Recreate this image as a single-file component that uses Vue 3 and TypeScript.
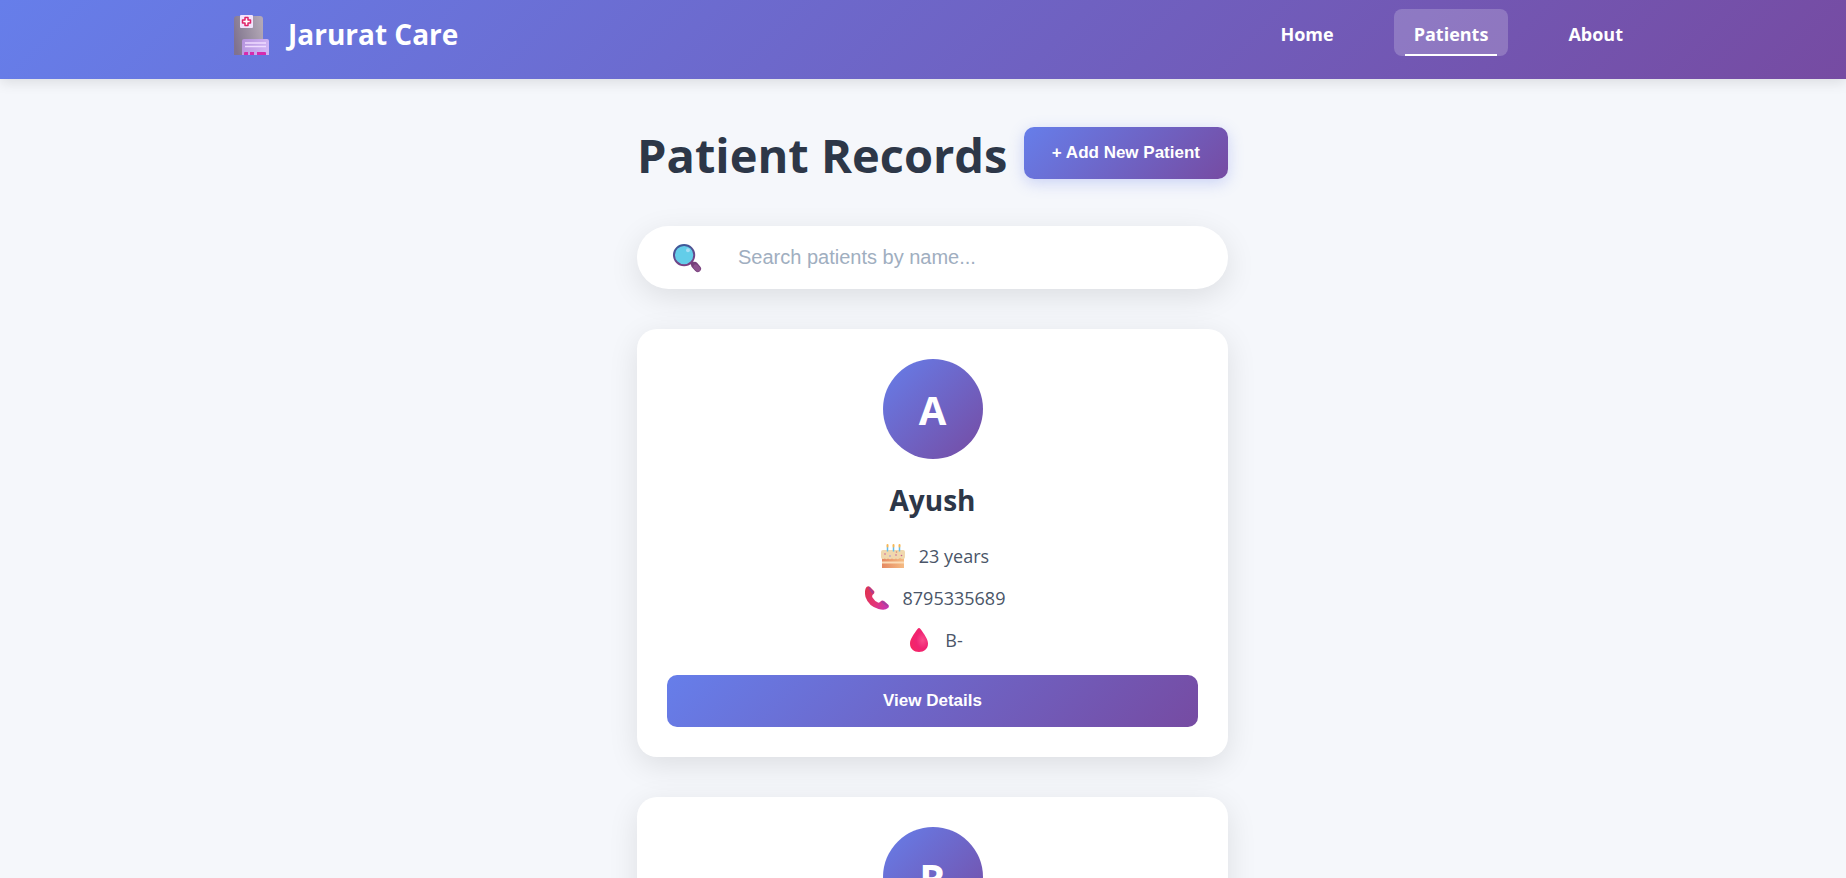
<script setup lang="ts">
import { ref, computed } from 'vue'

interface Patient {
  id: number
  initial: string
  name?: string
  age?: number
  phone?: string
  blood?: string
}

const links = ['Home', 'Patients', 'About']
const active = ref('Patients')
const query = ref('')

const patients: Patient[] = [
  { id: 1, initial: 'A', name: 'Ayush', age: 23, phone: '8795335689', blood: 'B-' },
  { id: 2, initial: 'R' },
]

const visible = computed(() =>
  patients.filter((p) => (p.name ?? p.initial).toLowerCase().includes(query.value.toLowerCase())),
)
</script>

<template>
  <div class="page">
    <header class="header">
      <div class="header-inner">
        <a href="#" class="brand">
          <svg class="brand-icon" viewBox="0 0 34 40" aria-hidden="true">
            <defs>
              <linearGradient id="tower" x1="0" x2="1" y1="0.6" y2="0.3">
                <stop offset="0" stop-color="#80728f" />
                <stop offset="0.3" stop-color="#8f8499" />
                <stop offset="1" stop-color="#b3a8b6" />
              </linearGradient>
              <linearGradient id="wing" x1="0" x2="1" y1="0" y2="0.3">
                <stop offset="0" stop-color="#b392dc" />
                <stop offset="1" stop-color="#d0b4f4" />
              </linearGradient>
            </defs>
            <path d="M0 40V4Q0 1 3 1H26Q29 1 29 4V40Z" fill="url(#tower)" />
            <rect x="6" y="0" width="13" height="13" rx="1" fill="#f1e3fc" />
            <path
              d="M11 2.500h3v2.500h2.500v3H14v2.500h-3V8H8.500V5H11Z"
              fill="#fff"
              stroke="#df2469"
              stroke-width="1.500"
              stroke-linejoin="round"
            />
            <path d="M8 40V26Q8 24 10 24H33Q35 24 35 26V40Z" fill="url(#wing)" />
            <path d="M11 28H32M11 31.500H32" stroke="#efdcff" stroke-width="1.500" />
            <path d="M10 40V38Q10 37 11 37H14V40ZM16 40V37H20V40ZM23 40V37H31Q32 37 32 38V40Z" fill="#d62bae" />
          </svg>
          <span>Jarurat Care</span>
        </a>
        <nav class="nav">
          <a
            v-for="link in links"
            :key="link"
            href="#"
            class="nav-link"
            :class="{ active: link === active }"
            @click.prevent="active = link"
            >{{ link }}</a
          >
        </nav>
      </div>
    </header>

    <main class="main">
      <div class="content">
        <div class="title-row">
          <h1>Patient Records</h1>
          <button type="button" class="btn add">+ Add New Patient</button>
        </div>

        <label class="search">
          <svg class="search-icon" viewBox="-1 -1 31 31" aria-hidden="true">
            <defs>
              <linearGradient id="rim" x1="0" x2="0.3" y1="0" y2="1">
                <stop offset="0" stop-color="#355c9c" />
                <stop offset="1" stop-color="#7b4183" />
              </linearGradient>
            </defs>
            <path d="M19 19L21 21" stroke="#75407a" stroke-width="4" />
            <path d="M22.500 22L25.500 25.500" stroke="#75407a" stroke-width="7" stroke-linecap="round" />
            <path d="M23.500 23.500L26 26" stroke="#8d538f" stroke-width="5" stroke-linecap="round" />
            <circle cx="11.500" cy="11.500" r="10.500" fill="#63cde9" stroke="url(#rim)" stroke-width="2" />
            <circle cx="15.500" cy="6.500" r="2" fill="#a6def5" />
          </svg>
          <input v-model="query" type="text" aria-label="Search patients" placeholder="Search patients by name..." />
        </label>

        <article v-for="p in visible" :key="p.id" class="card">
          <div class="avatar">{{ p.initial }}</div>
          <template v-if="p.name">
            <h2>{{ p.name }}</h2>
            <p class="fact">
              <svg class="fact-icon" viewBox="0 0 24 24" aria-hidden="true">
                <defs>
                  <linearGradient id="cake" x1="0" x2="1">
                    <stop offset="0" stop-color="#e58962" />
                    <stop offset="1" stop-color="#f5bb83" />
                  </linearGradient>
                </defs>
                <path d="M1 13H23V24H1Z" fill="url(#cake)" />
                <path d="M1 17.500H23V19.500H1Z" fill="#fbdcb7" />
                <path d="M0 8Q0 6 2 6H22Q24 6 24 8V13Q24 15 22 15Q20 15 19 14Q17 16 15 14.500Q13 16 11 14.500Q9 16 7 14.500Q5 16 4 14.500Q0 16 0 13Z" fill="#f0d8ad" />
                <path d="M6.500 3V7.500M12.500 3V7.500M18.500 3V7.500" stroke="#64bce9" stroke-width="1.500" />
                <path d="M6.500 1V2.500M12.500 1V2.500M18.500 1V2.500" stroke="#f6b653" stroke-width="2" stroke-linecap="round" />
                <g fill="#c66398">
                  <circle cx="4" cy="10" r="0.800" />
                  <circle cx="15" cy="11" r="0.800" />
                  <circle cx="20.500" cy="11.500" r="0.800" />
                </g>
                <circle cx="9" cy="12" r="0.800" fill="#a18bd2" />
                <circle cx="15.500" cy="8" r="0.800" fill="#dd8860" />
              </svg>
              <span>{{ p.age }} years</span>
            </p>
            <p class="fact">
              <svg class="fact-icon" viewBox="0 0 24 24" aria-hidden="true">
                <defs>
                  <linearGradient id="phone" x1="0" x2="1" y1="0.3" y2="0.8">
                    <stop offset="0" stop-color="#df3354" />
                    <stop offset="0.500" stop-color="#e33577" />
                    <stop offset="1" stop-color="#c735b2" />
                  </linearGradient>
                </defs>
                <path
                  d="M1.500 1Q3.500 -0.500 5 1L9 5Q10 6.500 8.500 8Q6.500 9.500 7.500 11.500Q9.500 15 13 16.500Q14.500 17 15.500 15.500Q17 14 19 15L23.500 19Q24.500 20.500 23 22Q20 25 13.500 23Q3.500 20 0.500 11Q-1 4 1.500 1Z"
                  fill="url(#phone)"
                />
                <path d="M3 1.500Q4 .5 5 1.500L8.500 5.500Q9.500 7 7.500 8Z" fill="#a83e91" />
                <path d="M16 16Q17 14.500 19 15.500L23 19Q23.500 20 22 20.500Z" fill="#a5429f" />
              </svg>
              <span>{{ p.phone }}</span>
            </p>
            <p class="fact">
              <svg class="fact-icon" viewBox="0 0 24 24" aria-hidden="true">
                <defs>
                  <radialGradient id="drop" cx="0.700" cy="0.500" r="0.700">
                    <stop offset="0" stop-color="#f94c8b" />
                    <stop offset="0.500" stop-color="#f02373" />
                    <stop offset="1" stop-color="#f52663" />
                  </radialGradient>
                </defs>
                <path d="M10.500 1Q12 -1 13.500 1C17 6 21 11 21 15.500C21 21 17 24 12 24S3 21 3 15.500C3 11 7 6 10.500 1Z" fill="url(#drop)" />
              </svg>
              <span>{{ p.blood }}</span>
            </p>
            <button type="button" class="btn details">View Details</button>
          </template>
        </article>
      </div>
    </main>
  </div>
</template>

<style>
body {
  margin: 0;
  background: #f5f7fb;
}
</style>

<style scoped>
.page {
  height: 100vh;
  overflow-x: hidden;
  overflow-y: auto;
  scrollbar-width: none;
  background: #f5f7fb;
  font-family: 'Segoe UI', 'Open Sans', 'Noto Sans', sans-serif;
  color: #2d3748;
}
.header {
  position: relative;
  background: linear-gradient(135deg, #667eea 0%, #764ba2 100%);
  box-shadow: 0 4px 12px rgba(0, 0, 0, 0.1);
}
.header-inner {
  display: flex;
  justify-content: space-between;
  max-width: 1440px;
  margin: 0 auto;
  height: 79px;
}
.brand {
  display: flex;
  align-items: center;
  gap: 20px;
  height: 70px;
  padding-left: 31px;
  color: #fff;
  font-size: 28px;
  font-weight: 700;
  line-height: 38px;
  text-decoration: none;
}
.brand-icon {
  width: 34px;
  height: 40px;
  overflow: visible;
}
.brand span {
  padding-bottom: 2px;
}
.nav {
  display: flex;
  gap: 40px;
  padding-top: 9px;
}
.nav-link {
  position: relative;
  height: 47px;
  padding: 0 20px;
  border-radius: 8px;
  box-sizing: border-box;
  color: #fff;
  font-size: 18px;
  font-weight: 700;
  line-height: 50px;
  text-decoration: none;
}
.nav-link.active {
  background: rgba(255, 255, 255, 0.2);
}
.nav-link.active::after {
  content: '';
  position: absolute;
  left: 10%;
  right: 10%;
  bottom: 0;
  height: 2px;
  background: #fff;
}
.main {
  padding: 48px 0 48px 19px;
}
.content {
  max-width: 591px;
  margin: 0 auto;
}
.title-row {
  display: flex;
  justify-content: space-between;
  height: 99px;
}
h1 {
  margin: 0;
  font-size: 47px;
  font-weight: 700;
  line-height: 56px;
  white-space: nowrap;
}
.btn {
  height: 52px;
  border: 0;
  border-radius: 10px;
  background: linear-gradient(135deg, #667eea 0%, #764ba2 100%);
  color: #fff;
  font-family: 'Liberation Sans', Arial, sans-serif;
  font-size: 17px;
  font-weight: 700;
  cursor: pointer;
}
.add {
  padding: 0 28px;
  white-space: nowrap;
  box-shadow: 0 4px 15px rgba(102, 126, 234, 0.3);
}
.search {
  display: flex;
  align-items: center;
  gap: 36px;
  height: 63px;
  margin-bottom: 40px;
  padding: 0 35px;
  border-radius: 50px;
  background: #fff;
  box-shadow: 0 8px 30px rgba(0, 0, 0, 0.1);
}
.search-icon {
  width: 30px;
  height: 30px;
  flex: none;
}
.search input {
  flex: 1;
  min-width: 0;
  padding: 0;
  border: 0;
  outline: 0;
  background: transparent;
  color: #2d3748;
  font-family: 'Liberation Sans', Arial, sans-serif;
  font-size: 20px;
}
.search input::placeholder {
  color: #a0aec0;
}
.card {
  display: flex;
  flex-direction: column;
  align-items: center;
  min-height: 368px;
  margin-bottom: 40px;
  padding: 30px;
  border-radius: 20px;
  background: #fff;
  box-shadow: 0 8px 30px rgba(0, 0, 0, 0.1);
}
.avatar {
  display: flex;
  align-items: center;
  justify-content: center;
  width: 100px;
  height: 100px;
  border-radius: 50%;
  background: linear-gradient(135deg, #667eea 0%, #764ba2 100%);
  color: #fff;
  font-size: 40px;
  font-weight: 700;
}
h2 {
  margin: 21px 0 15px;
  font-size: 28px;
  font-weight: 700;
  line-height: 40px;
}
.fact {
  display: flex;
  align-items: center;
  gap: 14px;
  height: 42px;
  margin: 0;
  padding-left: 5px;
  color: #4a5568;
  font-size: 18px;
}
.fact-icon {
  width: 24px;
  height: 24px;
}
.details {
  width: 100%;
  margin-top: 14px;
}
</style>
